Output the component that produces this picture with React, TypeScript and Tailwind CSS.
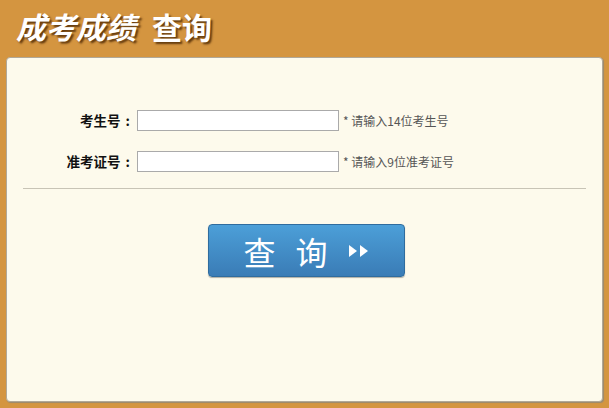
import React from 'react';

const FONT = { fontFamily: '"Noto Sans CJK SC", "Liberation Sans", sans-serif' };

const ROWS = [
  { label: '考生号', hint: '* 请输入14位考生号' },
  { label: '准考证号', hint: '* 请输入9位准考证号' },
];

export default function App() {
  return (
    <div className="w-[609px] h-[408px] bg-[#d49540] flex flex-col overflow-hidden" style={FONT}>
      {/* 标题 */}
      <div className="h-[57px] pl-[16px] pt-[6px]">
        <h1
          className="text-[30px] font-bold text-white leading-[40px] flex"
          style={{ textShadow: '2px 2px 2px rgba(70,35,0,0.8)' }}
        >
          <span className="italic">成考成绩</span>
          <span className="ml-[16px]">查询</span>
        </h1>
      </div>

      {/* 面板 */}
      <div className="mx-[6px] h-[345px] bg-[#fdfaec] rounded-[4px] border border-[#b0a898] shadow-[1px_1px_1px_#9a8a70] px-[16px] pt-[52px]">
        <div className="flex flex-col gap-[20px]">
          {ROWS.map((r) => (
            <div key={r.label} className="flex items-center h-[21px]">
              <div className="w-[114px] text-right text-[13.5px] font-bold text-[#111] pr-[7px]">
                {r.label}
                <span className="ml-[5px]">:</span>
              </div>
              <input className="w-[202px] h-[21px] bg-white border border-[#aaaaaa] outline-none" />
              <span className="ml-[4px] text-[12px] text-[#555]">{r.hint}</span>
            </div>
          ))}
        </div>

        <div className="mt-[16px] h-px bg-[#c8c4b6]" />

        <div className="flex justify-center mt-[35px] pl-[4px]">
          <button className="w-[197px] h-[53px] rounded-[4px] border border-[#2f6c9e] bg-gradient-to-b from-[#4c9fd8] to-[#3a7cb6] shadow-[0_1px_1px_rgba(0,0,0,0.3)] flex items-center justify-center text-white">
            <span className="text-[32px] leading-none font-normal">查</span>
            <span className="text-[32px] leading-none font-normal ml-[20px]">询</span>
            <svg width="22" height="14" viewBox="0 0 22 14" className="ml-[20px]">
              <polygon points="1,1 9,7 1,13" fill="white" />
              <polygon points="12,1 20,7 12,13" fill="white" />
            </svg>
          </button>
        </div>
      </div>
    </div>
  );
}
